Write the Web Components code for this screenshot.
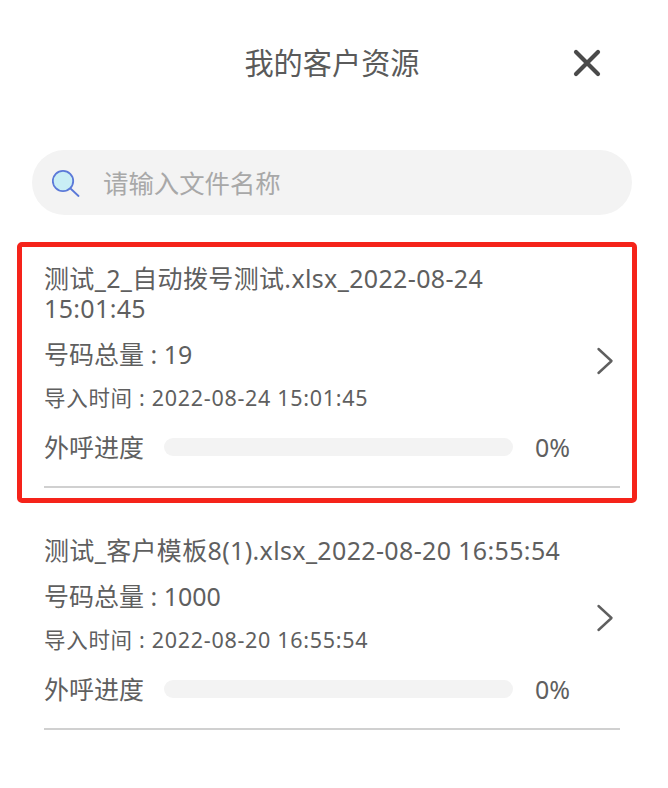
<!DOCTYPE html>
<html lang="zh">
<head>
<meta charset="utf-8">
<title>我的客户资源</title>
<style>
    html, body { margin: 0; background: #fff; }
    body {
        width: 668px;
        height: 788px;
        overflow: hidden;
        color: #5f5f5f;
        font-family: "Noto Sans", "Noto Sans CJK SC", sans-serif;
    }
</style>
</head>
<body>
<resource-page>
    <resource-item slot="marked" total="19" time="2022-08-24 15:01:45" progress="0">测试_2_自动拨号测试.xlsx_2022-08-24 15:01:45</resource-item>
    <resource-item total="1000" time="2022-08-20 16:55:54" progress="0">测试_客户模板8(1).xlsx_2022-08-20 16:55:54</resource-item>
</resource-page>

<script>
class PageHeader extends HTMLElement {
    constructor() {
        super();
        this.attachShadow({ mode: 'open' });
    }

    connectedCallback() {
        this.shadowRoot.innerHTML = `
            <style>
                :host {
                    display: grid;
                    grid-template-columns: 1fr auto 1fr;
                    align-items: center;
                    height: 126px;
                    padding: 0 67px 0 63px;
                }
                .title {
                    grid-column: 2;
                    font-size: 29.2px;
                    line-height: 40px;
                    color: #5a5a5a;
                }
                svg { justify-self: end; display: block; }
            </style>
            <div class="title"><slot></slot></div>
            <svg width="28" height="28" viewBox="0 0 28 28">
                <path d="M3 3 L25 25 M25 3 L3 25" stroke="#4a4a4a" stroke-width="4.2" stroke-linecap="round" fill="none"/>
            </svg>
        `;
    }
}

class SearchBar extends HTMLElement {
    constructor() {
        super();
        this.attachShadow({ mode: 'open' });
    }

    connectedCallback() {
        const placeholder = this.getAttribute('placeholder');
        this.shadowRoot.innerHTML = `
            <style>
                :host {
                    display: flex;
                    align-items: center;
                    gap: 23px;
                    height: 65px;
                    margin: 24px 36px 0 32px;
                    padding-left: 20px;
                    border-radius: 33px;
                    background: #f3f3f3;
                }
                svg { display: block; flex: none; }
                .placeholder {
                    font-size: 25.4px;
                    line-height: 34px;
                    color: #a8a8a8;
                }
            </style>
            <svg width="28" height="28" viewBox="0 0 28 28">
                <circle cx="11" cy="12" r="10.2" fill="#c9eef5" stroke="#5b79d8" stroke-width="1.8"/>
                <path d="M18.5 19.5 L26.5 27" stroke="#5b79d8" stroke-width="1.8" stroke-linecap="round"/>
            </svg>
            <div class="placeholder">${placeholder}</div>
        `;
    }
}

class ProgressBar extends HTMLElement {
    constructor() {
        super();
        this.attachShadow({ mode: 'open' });
    }

    connectedCallback() {
        const value = this.getAttribute('value') || 0;
        this.shadowRoot.innerHTML = `
            <style>
                :host {
                    display: block;
                    height: 18px;
                    border-radius: 9px;
                    background: #f3f3f3;
                    overflow: hidden;
                }
                .fill { height: 100%; background: #4a90e2; }
            </style>
            <div class="fill" style="width: ${value}%"></div>
        `;
    }
}

class ResourceItem extends HTMLElement {
    constructor() {
        super();
        this.attachShadow({ mode: 'open' });
    }

    connectedCallback() {
        const total = this.getAttribute('total');
        const time = this.getAttribute('time');
        const progress = this.getAttribute('progress');

        this.shadowRoot.innerHTML = `
            <style>
                :host {
                    display: block;
                    width: 576px;
                    box-sizing: border-box;
                    border-bottom: 2px solid #d0d0d0;
                    padding-bottom: 24px;
                }
                .row {
                    display: grid;
                    grid-template-columns: 530px 1fr;
                    align-items: center;
                }
                .info { display: flex; flex-direction: column; }
                .name, .total, .time, .progress { line-height: 30px; }
                .name { font-size: 25px; letter-spacing: 0.35px; }
                .total { font-size: 25px; margin-top: 16px; }
                .time { font-size: 21.5px; margin-top: 14px; letter-spacing: 0.7px; white-space: nowrap; }
                .progress {
                    display: grid;
                    grid-template-columns: 101px 349px auto;
                    align-items: center;
                    column-gap: 19px;
                    margin-top: 19px;
                    font-size: 25px;
                }
                .progress span:last-child { margin-left: 3px; }
                svg { display: block; justify-self: end; margin: 0 6px 3px 0; }
            </style>
            <div class="row">
                <div class="info">
                    <div class="name"><slot></slot></div>
                    <div class="total">号码总量 : ${total}</div>
                    <div class="time">导入时间 : ${time}</div>
                    <div class="progress">
                        <span>外呼进度</span>
                        <progress-bar value="${progress}"></progress-bar>
                        <span>${progress}%</span>
                    </div>
                </div>
                <svg width="18" height="28" viewBox="0 0 18 28">
                    <path d="M2.5 2 L15.5 14 L2.5 26" stroke="#5f5f5f" stroke-width="2.4" stroke-linecap="round" stroke-linejoin="round" fill="none"/>
                </svg>
            </div>
        `;
    }
}

class ResourcePage extends HTMLElement {
    constructor() {
        super();
        this.attachShadow({ mode: 'open' });
    }

    connectedCallback() {
        this.shadowRoot.innerHTML = `
            <style>
                :host { display: block; }
                .marked {
                    box-sizing: border-box;
                    width: 620px;
                    height: 261px;
                    margin: 27px 0 0 17px;
                    padding: 16px 0 0 22px;
                    border: 5px solid #f5231a;
                    border-radius: 5px;
                }
                .list { margin: 32px 0 0 44px; }
            </style>
            <page-header>我的客户资源</page-header>
            <search-bar placeholder="请输入文件名称"></search-bar>
            <div class="marked"><slot name="marked"></slot></div>
            <div class="list"><slot></slot></div>
        `;
    }
}

customElements.define('page-header', PageHeader);
customElements.define('search-bar', SearchBar);
customElements.define('progress-bar', ProgressBar);
customElements.define('resource-item', ResourceItem);
customElements.define('resource-page', ResourcePage);
</script>
</body>
</html>
